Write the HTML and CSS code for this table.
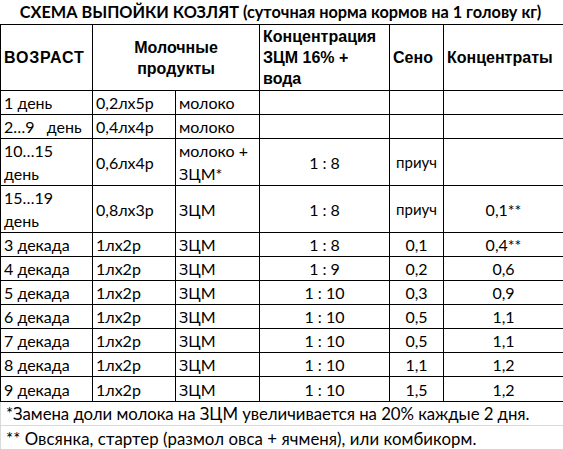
FILE: index.html
```html
<!DOCTYPE html>
<html lang="ru">
<head>
<meta charset="utf-8">
<link rel="stylesheet" href="styles.css">
</head>
<body>
<div class="sheet">
  <div class="title">СХЕМА ВЫПОЙКИ КОЗЛЯТ (суточная норма кормов на 1 голову кг)</div>
  <table class="grid">
    <colgroup>
      <col class="c1"><col class="c2"><col class="c3"><col class="c4"><col class="c5"><col class="c6">
    </colgroup>
    <thead>
      <tr class="head">
        <th class="left age">ВОЗРАСТ</th>
        <th colspan="2" class="mid">Молочные<br>продукты</th>
        <th class="left">Концентрация<br>ЗЦМ 16% +<br>вода</th>
        <th class="left">Сено</th>
        <th class="left">Концентраты</th>
      </tr>
    </thead>
    <tbody>
      <tr class="r23"><td>1 день</td><td>0,2лх5р</td><td>молоко</td><td></td><td></td><td></td></tr>
      <tr><td>2…9&nbsp;&nbsp; день</td><td>0,4лх4р</td><td>молоко</td><td></td><td></td><td></td></tr>
      <tr class="r47"><td>10…15<br>день</td><td>0,6лх4р</td><td>молоко +<br>ЗЦМ*</td><td class="ctr">1 : 8</td><td class="small">приуч</td><td></td></tr>
      <tr class="r46"><td>15…19<br>день</td><td>0,8лх3р</td><td>ЗЦМ</td><td class="ctr">1 : 8</td><td class="small">приуч</td><td class="ctr">0,1**</td></tr>
      <tr><td>3 декада</td><td>1лх2р</td><td>ЗЦМ</td><td class="ctr">1 : 8</td><td class="ctr">0,1</td><td class="ctr">0,4**</td></tr>
      <tr><td>4 декада</td><td>1лх2р</td><td>ЗЦМ</td><td class="ctr">1 : 9</td><td class="ctr">0,2</td><td class="ctr">0,6</td></tr>
      <tr><td>5 декада</td><td>1лх2р</td><td>ЗЦМ</td><td class="ctr">1 : 10</td><td class="ctr">0,3</td><td class="ctr">0,9</td></tr>
      <tr><td>6 декада</td><td>1лх2р</td><td>ЗЦМ</td><td class="ctr">1 : 10</td><td class="ctr">0,5</td><td class="ctr">1,1</td></tr>
      <tr><td>7 декада</td><td>1лх2р</td><td>ЗЦМ</td><td class="ctr">1 : 10</td><td class="ctr">0,5</td><td class="ctr">1,1</td></tr>
      <tr><td>8 декада</td><td>1лх2р</td><td>ЗЦМ</td><td class="ctr">1 : 10</td><td class="ctr">1,1</td><td class="ctr">1,2</td></tr>
      <tr class="r25"><td>9 декада</td><td>1лх2р</td><td>ЗЦМ</td><td class="ctr">1 : 10</td><td class="ctr">1,5</td><td class="ctr">1,2</td></tr>
    </tbody>
  </table>
  <div class="note n1">*Замена доли молока на ЗЦМ увеличивается на 20% каждые 2 дня.</div>
  <div class="note n2">** Овсянка, стартер (размол овса + ячменя), или комбикорм.</div>
</div>
</body>
</html>
```

FILE: styles.css
```css
html, body {
  margin: 0;
  padding: 0;
  background: #ffffff;
}
.sheet {
  width: 563px;
  height: 449px;
  overflow: hidden;
  font-family: "Lato", "Liberation Sans", sans-serif;
  color: #000;
}
.title {
  height: 24px;
  line-height: 24px;
  font-weight: bold;
  font-size: 16.3px;
  text-align: center;
  white-space: nowrap;
  box-sizing: border-box;
  padding-right: 2px;
}
.grid {
  border-collapse: collapse;
  table-layout: fixed;
  width: 563px;
  font-size: 16px;
}
.c1 { width: 92px; }
.c2 { width: 83px; }
.c3 { width: 84px; }
.c4 { width: 130px; }
.c5 { width: 54px; }
.c6 { width: 120px; }
.grid th, .grid td {
  border: 1px solid #000;
  padding: 0 3px;
  vertical-align: middle;
  white-space: nowrap;
  box-sizing: border-box;
}
.grid th {
  font-family: "Liberation Sans", Arial, sans-serif;
  font-weight: bold;
  font-size: 16px;
  line-height: 21px;
}
.grid th.left { text-align: left; }
.grid th.mid { text-align: center; }
.grid th.age { letter-spacing: 0.8px; }
.head { height: 66px; }
.grid td {
  line-height: 23px;
  height: 24px;
  text-align: left;
}
.grid td.ctr { text-align: center; }
.grid td.small { font-size: 15px; text-align: center; padding: 0 1px; }
.r23 td { height: 23px; }
.r25 td { height: 25px; }
.r47 td { height: 47px; }
.r46 td { height: 46px; }
.note {
  height: 23px;
  line-height: 23px;
  padding-left: 5px;
  font-size: 16.8px;
  white-space: nowrap;
  border-bottom: 1px solid #d9d9d9;
  border-left: 1px solid #d9d9d9;
}
.note.n1 { letter-spacing: -0.05px; }
.note.n2 {
  height: 27px;
  line-height: 25px;
  letter-spacing: 0.07px;
}
```
